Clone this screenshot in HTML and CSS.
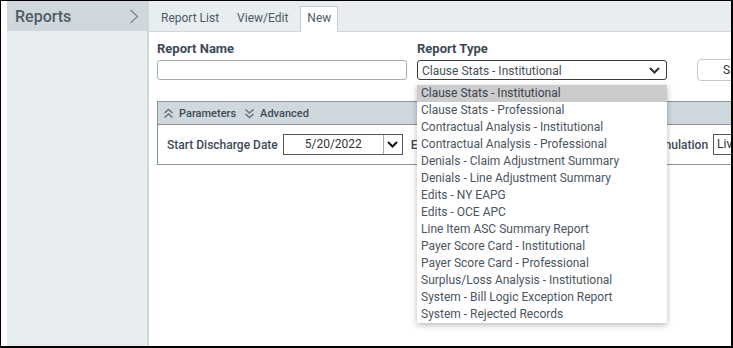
FILE: index.html
```html
<!DOCTYPE html>
<html>
<head>
<link rel="stylesheet" href="styles.css">
</head>
<body>
  <div class="frame">
    <div class="gutter"></div>
    <div class="sidebar">
      <div class="sidebar-head">
        <span>Reports</span>
        <svg class="side-arrow" width="10" height="15" viewBox="0 0 10 15"><path d="M1.5 1 L8.5 7.5 L1.5 14" fill="none" stroke="#7a8288" stroke-width="1.2"/></svg>
      </div>
    </div>
    <div class="main">
      <div class="tabs">
        <div class="tab">Report List</div>
        <div class="tab">View/Edit</div>
        <div class="tab active">New</div>
      </div>
      <div class="form">
        <div class="form-row">
          <div class="field name-field">
            <label>Report Name</label>
            <input type="text" class="text-input">
          </div>
          <div class="field type-field">
            <label>Report Type</label>
            <div class="select">
              <span>Clause Stats - Institutional</span>
              <svg width="11" height="7" viewBox="0 0 11 7"><path d="M1 1 L5.5 5.5 L10 1" fill="none" stroke="#333" stroke-width="2"/></svg>
            </div>
            <ul class="dropdown">
              <li class="selected">Clause Stats - Institutional</li>
              <li>Clause Stats - Professional</li>
              <li>Contractual Analysis - Institutional</li>
              <li>Contractual Analysis - Professional</li>
              <li>Denials - Claim Adjustment Summary</li>
              <li>Denials - Line Adjustment Summary</li>
              <li>Edits - NY EAPG</li>
              <li>Edits - OCE APC</li>
              <li>Line Item ASC Summary Report</li>
              <li>Payer Score Card - Institutional</li>
              <li>Payer Score Card - Professional</li>
              <li>Surplus/Loss Analysis - Institutional</li>
              <li>System - Bill Logic Exception Report</li>
              <li>System - Rejected Records</li>
            </ul>
          </div>
          <button class="save-btn">Save</button>
        </div>

        <div class="panel">
          <div class="panel-head">
            <svg width="11" height="11" viewBox="0 0 11 11"><path d="M1.5 5 L5.5 1.5 L9.5 5 M1.5 9.5 L5.5 6 L9.5 9.5" fill="none" stroke="#6b757c" stroke-width="1.6"/></svg>
            <span class="head-link">Parameters</span>
            <svg width="11" height="11" viewBox="0 0 11 11"><path d="M1.5 1.5 L5.5 5 L9.5 1.5 M1.5 6 L5.5 9.5 L9.5 6" fill="none" stroke="#6b757c" stroke-width="1.6"/></svg>
            <span class="head-link">Advanced</span>
          </div>
          <div class="panel-body">
            <span class="param-label">Start Discharge Date</span>
            <div class="date-box">
              <span class="date-text">5/20/2022</span>
              <span class="date-btn"><svg width="11" height="7" viewBox="0 0 11 7"><path d="M1 1 L5.5 5.5 L10 1" fill="none" stroke="#111" stroke-width="2"/></svg></span>
            </div>
            <span class="param-label">End Discharge Date</span>
            <div class="date-box">
              <span class="date-text">5/20/2022</span>
              <span class="date-btn"><svg width="11" height="7" viewBox="0 0 11 7"><path d="M1 1 L5.5 5.5 L10 1" fill="none" stroke="#111" stroke-width="2"/></svg></span>
            </div>
            <span class="param-label sim-label">Simulation</span>
            <div class="sim-box">Live</div>
          </div>
        </div>
      </div>
    </div>
  </div>
</body>
</html>
```

FILE: styles.css
```css
/* page frame */
body {
  margin: 0;
  font-family: Roboto, "Liberation Sans", sans-serif;
  color: #44525e;
}

.frame {
  display: flex;
  width: 733px;
  height: 348px;
  box-sizing: border-box;
  border: 1px solid #000;
  border-right-width: 2px;
  border-bottom-width: 2px;
  background: #fff;
  overflow: hidden;
}

.gutter {
  width: 6px;
  flex: none;
}

/* left menu */
.sidebar {
  width: 140px;
  flex: none;
  background: #e8edf0;
  border-right: 2px solid #d0d8dc;
}

.sidebar-head {
  height: 30px;
  background: #cfd8dc;
  display: flex;
  align-items: center;
  justify-content: space-between;
  padding: 0 8px 0 8px;
  font-size: 16px;
  font-weight: 500;
  color: #505c66;
}

.side-arrow {
  margin-top: 1px;
}

/* right content */
.main {
  flex: 1;
  min-width: 0;
  overflow: hidden;
}

.tabs {
  height: 30px;
  background: #e8edf0;
  border-bottom: 1px solid #d2d6d9;
  display: flex;
  align-items: flex-end;
  padding-left: 4px;
}

.tab {
  font-size: 12px;
  color: #4c5a66;
  padding: 0 10px 5px 8px;
  line-height: 15px;
}

.tab.active {
  background: #fff;
  border: 1px solid #c5cdd2;
  border-bottom: none;
  margin-bottom: -1px;
  margin-left: 2px;
  padding: 4px 6px 6px 6px;
}

.form {
  padding: 9px 0 0 8px;
}

.form-row {
  display: flex;
  align-items: flex-end;
  gap: 10px;
}

.field {
  display: flex;
  flex-direction: column;
  width: 250px;
  flex: none;
  position: relative;
}

.field label {
  font-size: 13px;
  font-weight: 700;
  color: #3e4a55;
  line-height: 16px;
  margin-bottom: 3px;
}

.text-input {
  height: 20px;
  box-sizing: border-box;
  border: 1px solid #a9adb0;
  border-radius: 3px;
  margin: 0;
}

.select {
  height: 20px;
  box-sizing: border-box;
  border: 1px solid #3a3a3a;
  border-radius: 3px;
  display: flex;
  align-items: center;
  justify-content: space-between;
  padding: 1px 6px 0 4px;
  font-size: 12px;
  color: #44505a;
}

.save-btn {
  margin-left: 20px;
  height: 22px;
  width: 80px;
  flex: none;
  margin-bottom: -1px;
  border: 1px solid #c4c8cb;
  border-radius: 4px;
  background: #fff;
  font-family: Roboto, "Liberation Sans", sans-serif;
  font-size: 12px;
  color: #333;
  text-align: left;
  padding-left: 25px;
}

/* open list of report types */
.dropdown {
  position: absolute;
  top: 100%;
  left: 0;
  width: 250px;
  margin: 5px 0 0 0;
  padding: 0;
  list-style: none;
  background: #fff;
  box-shadow: 0 2px 6px rgba(0, 0, 0, 0.28);
  z-index: 5;
}

.dropdown li {
  height: 17px;
  line-height: 17px;
  font-size: 12px;
  padding-left: 4px;
  color: #4a5561;
  white-space: nowrap;
}

.dropdown li.selected {
  background: #cccccc;
  color: #39434c;
}

/* parameters panel */
.panel {
  margin-top: 21px;
  width: 640px;
  border: 1px solid #8d9296;
}

.panel-head {
  height: 22px;
  background: #cfd8dc;
  border-bottom: 1px solid #8d9296;
  display: flex;
  align-items: center;
  padding-left: 5px;
  gap: 5px;
}

.head-link {
  font-size: 11px;
  font-weight: 500;
  color: #3e4a55;
  margin-right: 3px;
}

.panel-body {
  height: 39px;
  display: flex;
  align-items: center;
  padding-left: 9px;
  white-space: nowrap;
}

.param-label {
  font-size: 12px;
  font-weight: 500;
  color: #3e4a55;
  margin-right: 5px;
}

.date-box {
  display: flex;
  height: 21px;
  width: 120px;
  box-sizing: border-box;
  border: 1px solid #555;
  margin-right: 8px;
  flex: none;
}

.date-text {
  flex: 1;
  text-align: center;
  font-size: 12px;
  line-height: 19px;
  color: #333;
  border-right: 1px solid #aaa;
}

.date-btn {
  width: 18px;
  display: flex;
  align-items: center;
  justify-content: center;
}

.sim-label {
  margin-left: 2px;
}

.sim-box {
  height: 21px;
  width: 60px;
  box-sizing: border-box;
  border: 1px solid #555;
  font-size: 12px;
  line-height: 19px;
  padding-left: 3px;
  color: #333;
  flex: none;
}
```
